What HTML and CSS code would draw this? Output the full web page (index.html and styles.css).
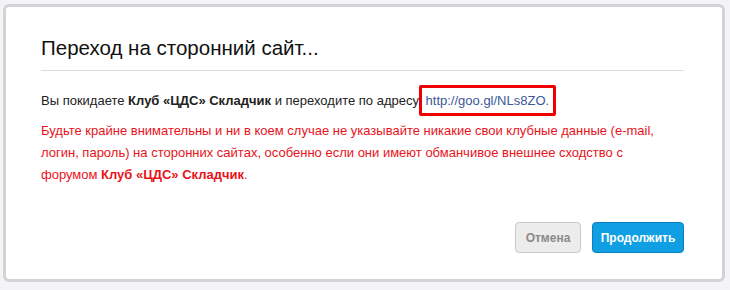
FILE: index.html
```html
<!DOCTYPE html>
<html lang="ru">
<head>
<meta charset="utf-8">
<link rel="stylesheet" href="styles.css">
</head>
<body>
<div class="dialog">
  <h1 class="title">Переход на сторонний сайт...</h1>
  <div class="content">
    <p class="lead">Вы покидаете <b>Клуб «ЦДС» Складчик</b> и переходите по адресу <a class="link" href="#">http://goo.gl/NLs8ZO.</a></p>
    <p class="warn">Будьте крайне внимательны и ни в коем случае не указывайте никакие свои клубные данные (e-mail, логин, пароль) на сторонних сайтах, особенно если они имеют обманчивое внешнее сходство с форумом <b>Клуб «ЦДС» Складчик</b>.</p>
  </div>
  <div class="actions">
    <button class="btn btn-cancel">Отмена</button>
    <button class="btn btn-primary">Продолжить</button>
  </div>
</div>
</body>
</html>
```
FILE: styles.css
```css
html, body {
  margin: 0;
  padding: 0;
  background: #f4f4f6;
}
body {
  font-family: "Liberation Sans", Arial, sans-serif;
  width: 730px;
  height: 290px;
  overflow: hidden;
}
.dialog {
  box-sizing: border-box;
  margin: 4px 0 0 3px;
  width: 722px;
  height: 278px;
  background: #fff;
  border: 3px solid #d3d3d5;
  border-radius: 6px;
  padding: 0 38px 0 35px;
  display: flex;
  flex-direction: column;
}
.title {
  margin: 0;
  padding: 29px 0 10px;
  font-size: 20.5px;
  font-weight: normal;
  line-height: 24px;
  color: #111;
  border-bottom: 1px solid #dcdcdc;
}
.content {
  font-size: 13px;
  color: #222;
}
.lead {
  margin: 20px 0 0;
  line-height: 20px;
}
.link {
  color: #3b5998;
  text-decoration: none;
  border: 3px solid #e00;
  border-radius: 2px;
  padding: 5px 4px 5px 4px;
  margin-left: -4px;
}
.warn {
  margin: 9px 0 0;
  max-width: 628px;
  color: #e8131b;
  line-height: 22px;
}
.actions {
  margin-top: auto;
  margin-bottom: 26px;
  display: flex;
  justify-content: flex-end;
  gap: 11px;
}
.btn {
  font-family: "Liberation Sans", Arial, sans-serif;
  font-size: 12px;
  font-weight: bold;
  height: 31px;
  border-radius: 4px;
  cursor: pointer;
}
.btn-cancel {
  width: 66px;
  background: #ececec;
  border: 1px solid #c9c9c9;
  color: #8a8a8a;
}
.btn-primary {
  width: 92px;
  background: #109fe3;
  border: 1px solid #0a7fc0;
  color: #fff;
}
```
